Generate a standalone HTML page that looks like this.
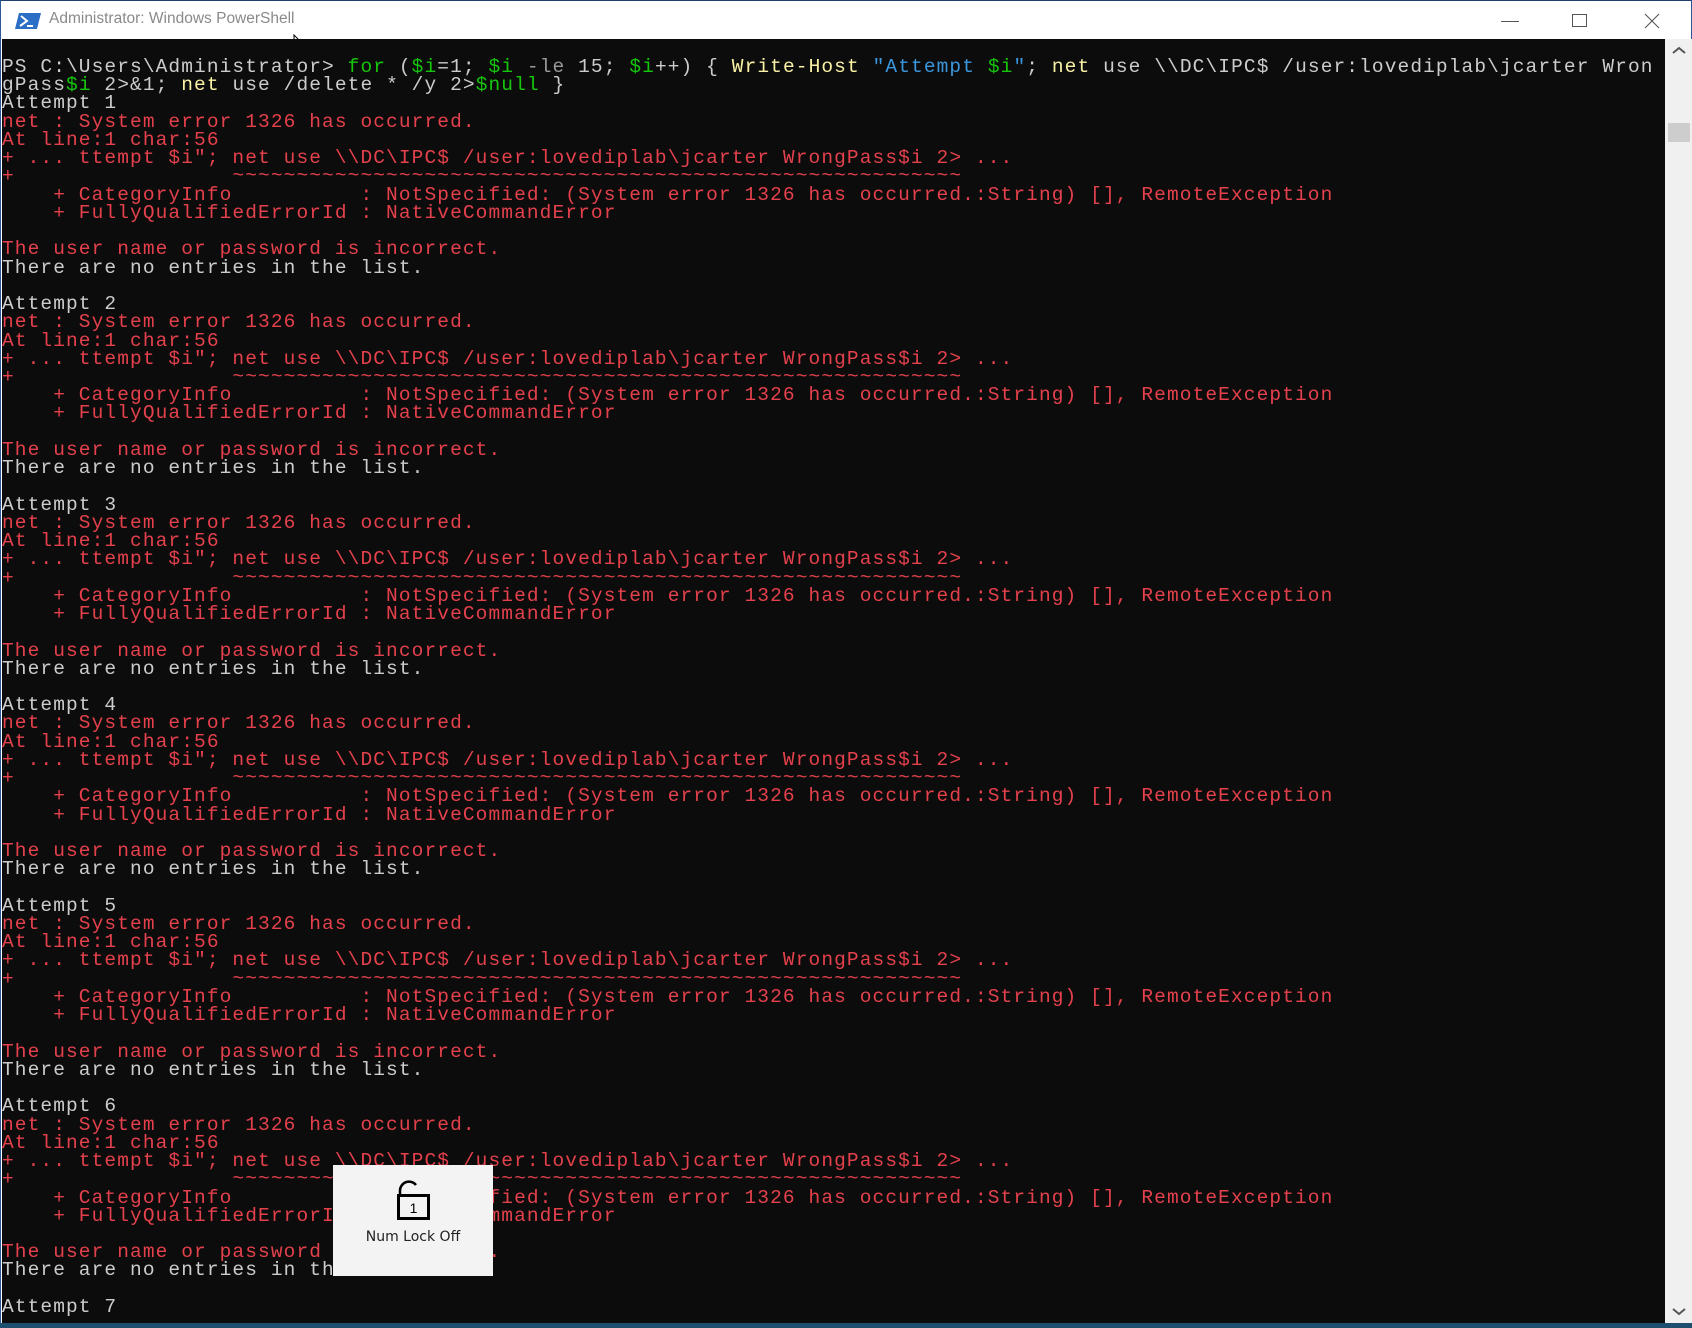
<!DOCTYPE html>
<html><head><meta charset="utf-8"><style>
html,body{margin:0;padding:0;width:1692px;height:1328px;overflow:hidden;background:#fff;}
#win{position:absolute;left:0;top:0;width:1690px;height:1326px;border:1px solid #2b5797;border-top-color:#1f3f6f;background:#fff;}
#title{position:absolute;left:0;top:0;width:1690px;height:38px;background:#fff;}
#title .t{position:absolute;left:48px;top:9px;font:15.5px "Liberation Sans",sans-serif;color:#8a8a8a;}
#term{position:absolute;left:1px;top:38px;width:1663px;height:1286px;background:#0c0c0c;overflow:hidden;}
#sb{position:absolute;left:1664px;top:38px;width:27px;height:1286px;background:#f0f0f0;}
#thumb{position:absolute;left:3px;top:84px;width:22px;height:19px;background:#cdcdcd;}
pre{margin:0;position:absolute;left:0px;top:57px;font-family:"Liberation Mono",monospace;font-size:19.5px;letter-spacing:1.1px;line-height:18.24px;color:#cccccc;white-space:pre;}
.r{color:#e4414c}.y{color:#f9f1a5}.g{color:#16c60c}.b{color:#3a96dd}.d{color:#9a9a9a}
#bot{position:absolute;left:0;top:1323px;width:1692px;height:5px;background:#1e4f6e;}
#pop{position:absolute;left:333px;top:1165px;width:160px;height:111px;background:#f3f3f3;}
#pop .l{position:absolute;left:0;width:160px;top:64px;text-align:center;font:14px "DejaVu Sans","Liberation Sans",sans-serif;color:#222;}
</style></head><body>
<div id="win">
<div id="title">
<svg style="position:absolute;left:14px;top:12px" width="26" height="16" viewBox="0 0 26 16"><path d="M4 0H26L22 16H0Z" fill="#2a6ec6"/><path d="M6 3L12 8L5 13" stroke="#fff" stroke-width="2" fill="none"/><path d="M12 13H18" stroke="#fff" stroke-width="2"/></svg>
<span class="t">Administrator: Windows PowerShell</span>
<svg style="position:absolute;left:1497px;top:10px" width="180" height="20"><path d="M3 10.5H21" stroke="#555" stroke-width="1"/><rect x="74.5" y="3.5" width="14" height="12" fill="none" stroke="#555"/><path d="M147 3L161 17M161 3L147 17" stroke="#555" stroke-width="1.1"/></svg>
<svg style="position:absolute;left:292px;top:33px" width="16" height="22"><path d="M1 1V17L5 13L8 20L10 19L7 12H12Z" fill="#fff" stroke="#000" stroke-width="1"/></svg>
</div>
<div id="term">
<pre style="top:19px">PS C:\Users\Administrator&gt; <span class="g">for</span> (<span class="g">$i</span>=1; <span class="g">$i</span> <span class="d">-le</span> 15; <span class="g">$i</span>++) { <span class="y">Write-Host</span> <span class="b">"Attempt </span><span class="g">$i</span><span class="b">"</span>; <span class="y">net</span> use \\DC\IPC$ /user:lovediplab\jcarter Wron
gPass<span class="g">$i</span> 2&gt;&amp;1; <span class="y">net</span> use /delete * /y 2&gt;<span class="g">$null</span> }
Attempt 1
<span class="r">net : System error 1326 has occurred.
At line:1 char:56
+ ... ttempt $i"; net use \\DC\IPC$ /user:lovediplab\jcarter WrongPass$i 2&gt; ...
+                 ~~~~~~~~~~~~~~~~~~~~~~~~~~~~~~~~~~~~~~~~~~~~~~~~~~~~~~~~~
    + CategoryInfo          : NotSpecified: (System error 1326 has occurred.:String) [], RemoteException
    + FullyQualifiedErrorId : NativeCommandError

The user name or password is incorrect.</span>
There are no entries in the list.

Attempt 2
<span class="r">net : System error 1326 has occurred.
At line:1 char:56
+ ... ttempt $i"; net use \\DC\IPC$ /user:lovediplab\jcarter WrongPass$i 2&gt; ...
+                 ~~~~~~~~~~~~~~~~~~~~~~~~~~~~~~~~~~~~~~~~~~~~~~~~~~~~~~~~~
    + CategoryInfo          : NotSpecified: (System error 1326 has occurred.:String) [], RemoteException
    + FullyQualifiedErrorId : NativeCommandError

The user name or password is incorrect.</span>
There are no entries in the list.

Attempt 3
<span class="r">net : System error 1326 has occurred.
At line:1 char:56
+ ... ttempt $i"; net use \\DC\IPC$ /user:lovediplab\jcarter WrongPass$i 2&gt; ...
+                 ~~~~~~~~~~~~~~~~~~~~~~~~~~~~~~~~~~~~~~~~~~~~~~~~~~~~~~~~~
    + CategoryInfo          : NotSpecified: (System error 1326 has occurred.:String) [], RemoteException
    + FullyQualifiedErrorId : NativeCommandError

The user name or password is incorrect.</span>
There are no entries in the list.

Attempt 4
<span class="r">net : System error 1326 has occurred.
At line:1 char:56
+ ... ttempt $i"; net use \\DC\IPC$ /user:lovediplab\jcarter WrongPass$i 2&gt; ...
+                 ~~~~~~~~~~~~~~~~~~~~~~~~~~~~~~~~~~~~~~~~~~~~~~~~~~~~~~~~~
    + CategoryInfo          : NotSpecified: (System error 1326 has occurred.:String) [], RemoteException
    + FullyQualifiedErrorId : NativeCommandError

The user name or password is incorrect.</span>
There are no entries in the list.

Attempt 5
<span class="r">net : System error 1326 has occurred.
At line:1 char:56
+ ... ttempt $i"; net use \\DC\IPC$ /user:lovediplab\jcarter WrongPass$i 2&gt; ...
+                 ~~~~~~~~~~~~~~~~~~~~~~~~~~~~~~~~~~~~~~~~~~~~~~~~~~~~~~~~~
    + CategoryInfo          : NotSpecified: (System error 1326 has occurred.:String) [], RemoteException
    + FullyQualifiedErrorId : NativeCommandError

The user name or password is incorrect.</span>
There are no entries in the list.

Attempt 6
<span class="r">net : System error 1326 has occurred.
At line:1 char:56
+ ... ttempt $i"; net use \\DC\IPC$ /user:lovediplab\jcarter WrongPass$i 2&gt; ...
+                 ~~~~~~~~~~~~~~~~~~~~~~~~~~~~~~~~~~~~~~~~~~~~~~~~~~~~~~~~~
    + CategoryInfo          : NotSpecified: (System error 1326 has occurred.:String) [], RemoteException
    + FullyQualifiedErrorId : NativeCommandError

The user name or password is incorrect.</span>
There are no entries in the list.

Attempt 7</pre>
</div>
<div id="sb"><svg style="position:absolute;left:6px;top:6px" width="16" height="10"><path d="M2 8L8 3L14 8" stroke="#555" stroke-width="2" fill="none"/></svg><div id="thumb"></div><svg style="position:absolute;left:6px;top:1268px" width="16" height="10"><path d="M2 2L8 7L14 2" stroke="#555" stroke-width="2" fill="none"/></svg></div>
</div>
<div id="bot"></div>
<div id="pop">
<svg style="position:absolute;left:63px;top:14px" width="36" height="42" viewBox="0 0 36 42"><path d="M4 16V12A9 9 0 0 1 20 6" stroke="#000" stroke-width="2.5" fill="none"/><rect x="2.5" y="16.5" width="30" height="23" fill="none" stroke="#000" stroke-width="3"/><text x="17.5" y="34" text-anchor="middle" font-family="Liberation Sans,sans-serif" font-size="14" fill="#000">1</text></svg>
<div class="l">Num Lock Off</div>
</div>
</body></html>
